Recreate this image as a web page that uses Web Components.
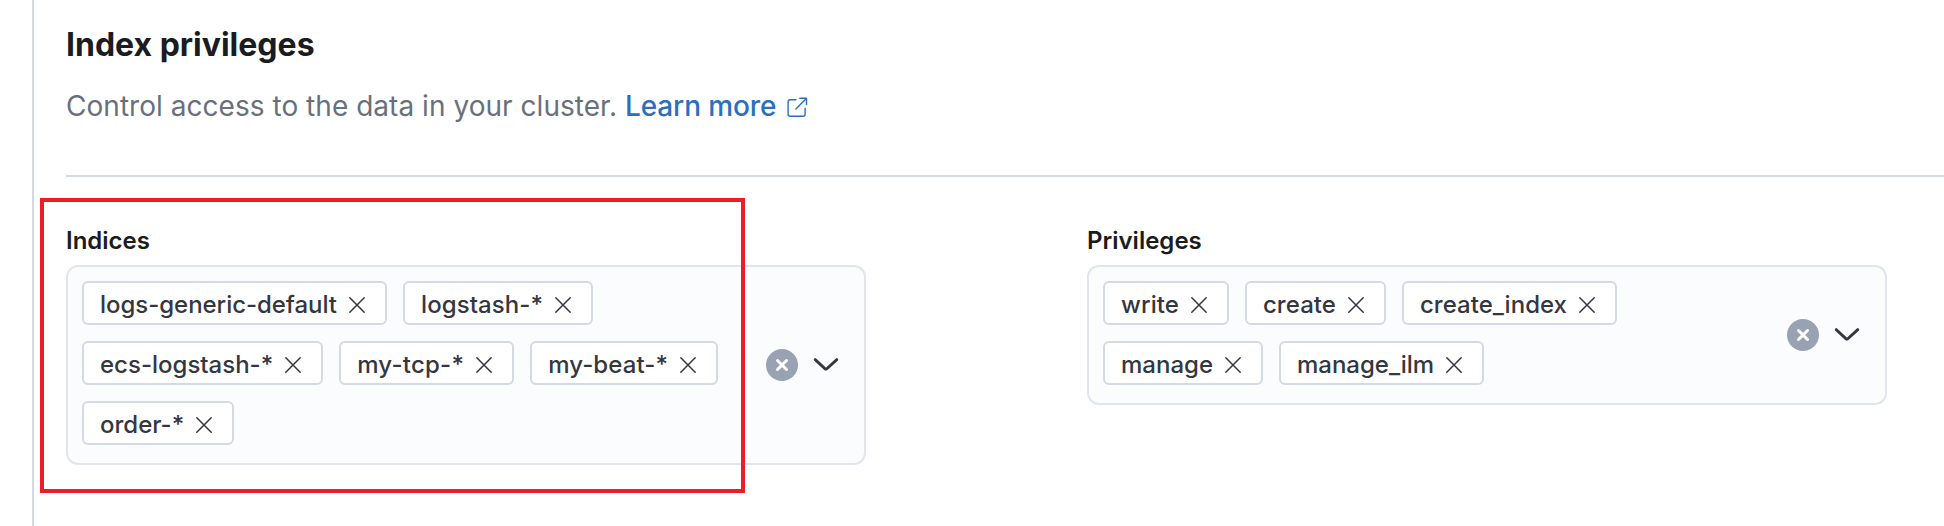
<!DOCTYPE html>
<html lang="en"><head><meta charset="utf-8"><title>Index privileges</title>
<style>
html,body{margin:0;height:100%;background:#fff;overflow:hidden}
body{font-family:Inter,"Liberation Sans",sans-serif;color:#343741}
</style></head><body>
<privileges-panel>
  <section-header heading="Index privileges" link="Learn more">Control access to the data in your cluster.</section-header>
  <field-row>
    <combo-field label="Indices" highlighted>
      <combo-pill style="--track:-.04px">logs-generic-default</combo-pill><combo-pill style="--track:.08px">logstash-*</combo-pill><combo-pill>ecs-logstash-*</combo-pill><combo-pill style="--track:.23px">my-tcp-*</combo-pill><combo-pill style="--track:.11px">my-beat-*</combo-pill><combo-pill>order-*</combo-pill>
    </combo-field>
    <combo-field label="Privileges">
      <combo-pill style="--track:.08px">write</combo-pill><combo-pill style="--track:.05px">create</combo-pill><combo-pill style="--track:.03px">create_index</combo-pill><combo-pill>manage</combo-pill><combo-pill>manage_ilm</combo-pill>
    </combo-field>
  </field-row>
</privileges-panel>
<script>
function define(name, render) {
  customElements.define(name, class extends HTMLElement {
    constructor() { super(); this.attachShadow({ mode: 'open' }); }
    connectedCallback() { this.shadowRoot.innerHTML = render(this); }
  });
}

define('privileges-panel', () => `
<style>:host{display:block;box-sizing:border-box;height:526px;margin-left:32px;border-left:2px solid #d3dae6;padding:25px 0 0 32px}</style>
<slot></slot>`);

define('section-header', el => `
<style>
:host{display:block;border-bottom:2px solid #d3dae6;height:150px}
h2{margin:0;font-size:32px;line-height:40px;font-weight:700;color:#1a1c21}
p{margin:20px 0 0;display:flex;align-items:center;font-size:28px;line-height:42px;color:#69707d;white-space:pre;letter-spacing:.035px}
a{display:flex;align-items:center;color:#2b6fbd;font-weight:500;letter-spacing:-.1px}
svg{margin-left:10px;display:block;overflow:visible}
</style>
<h2>${el.getAttribute('heading')}</h2>
<p><span><slot></slot> </span><a><span>${el.getAttribute('link')}</span><svg width="22" height="22" viewBox="0 0 22 22" fill="none" stroke="currentColor" stroke-width="1.4" stroke-linecap="round" stroke-linejoin="round"><path d="M9.900 4.700H4.100a2 2 0 0 0-2 2v12.600a2 2 0 0 0 2 2h13a2 2 0 0 0 2-2v-6M9.900 14 20.500 3.200M13.800 3.200h6.700v6.300"/></svg></a></p>`);

define('field-row', () => `
<style>:host{display:grid;grid-template-columns:800px 800px;column-gap:221px;align-items:start;padding-top:49px}</style>
<slot></slot>`);

define('combo-field', el => `
<style>
:host{display:block;position:relative}
label{display:block;font-size:24px;line-height:30px;font-weight:600;color:#1a1c21;margin-bottom:9px}
.box{box-sizing:border-box;display:flex;align-items:center;border:2px solid #e2e5f0;border-radius:12px;background:#fbfcfe;padding:14px 22px 18px 14px}
.pills{display:flex;flex-wrap:wrap;gap:16px;flex:1;margin-right:20px}
.icons{display:flex;gap:12px;align-items:center;margin-top:4px}
svg{display:block}
.mark{position:absolute;box-sizing:border-box;left:-26px;top:-28px;width:705px;height:295px;border:4px solid #ee1c25}
</style>
<label>${el.getAttribute('label')}</label>
<div class="box"><div class="pills"><slot></slot></div>
<div class="icons">
<svg width="32" height="32" viewBox="0 0 32 32"><circle cx="16" cy="16" r="16" fill="#98a2b3"/><path d="M11.500 11.500l9 9M20.500 11.500l-9 9" stroke="#fff" stroke-width="3" stroke-linecap="round"/></svg>
<svg width="32" height="32" viewBox="0 0 32 32"><path d="M5.200 10.600l9.700 9a1.600 1.600 0 0 0 2.200 0l9.700-9" fill="none" stroke="#343741" stroke-width="2.800" stroke-linecap="round"/></svg>
</div></div>${el.hasAttribute('highlighted') ? '<div class="mark"></div>' : ''}`);

define('combo-pill', () => `
<style>
:host{box-sizing:border-box;display:flex;align-items:center;height:44px;padding:0 16px;border:2px solid #d3dae6;border-radius:6px;background:#fff;font-size:24px;line-height:36px;font-weight:500;color:#343741;white-space:nowrap}
span{position:relative;top:2px;letter-spacing:var(--track,0)}
svg{display:block;margin:4px 0 0 8px}
</style>
<span><slot></slot></span><svg width="24" height="24" viewBox="0 0 24 24"><path d="M4.800 4.800l14.400 14.400M19.200 4.800L4.800 19.200" stroke="#343741" stroke-width="1.500" stroke-linecap="round"/></svg>`);
</script>
</body></html>
